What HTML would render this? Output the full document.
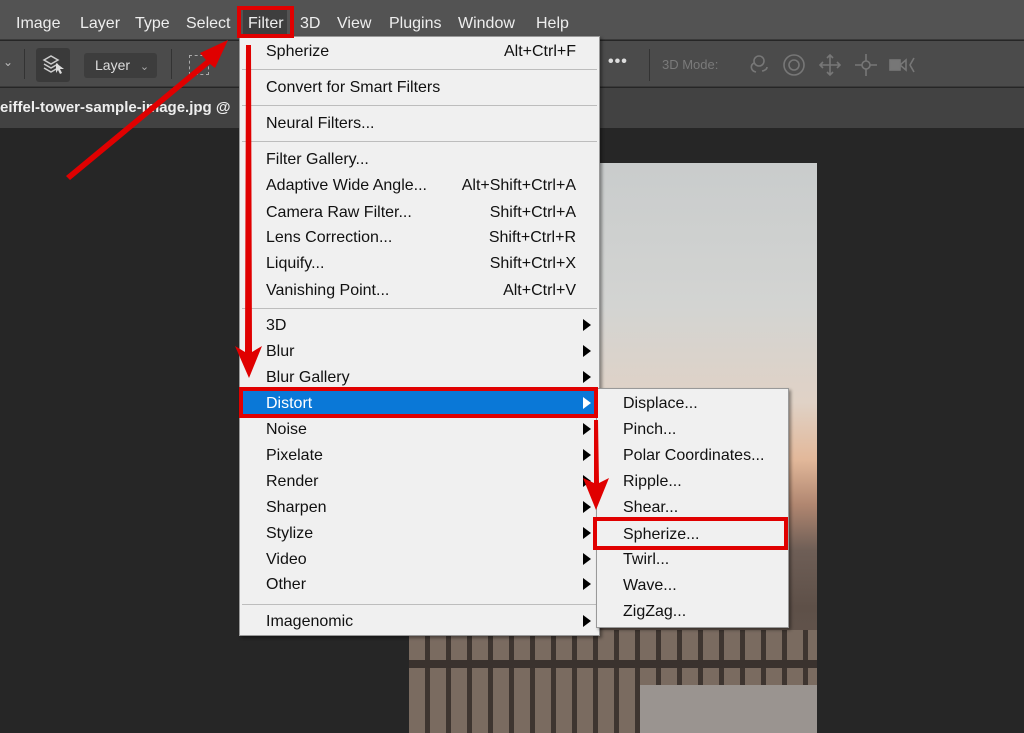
<!DOCTYPE html>
<html><head><meta charset="utf-8"><style>
*{margin:0;padding:0;box-sizing:border-box}
body{width:1024px;height:733px;overflow:hidden;background:#262626;font-family:"Liberation Sans",sans-serif;position:relative}
.abs{position:absolute}
#mb{left:0;top:0;width:1024px;height:40px;background:#535353;border-bottom:1px solid #3a3a3a}
#mb span{position:absolute;top:15px;color:#eee;font-size:16px}
#tb{left:0;top:41px;width:1024px;height:46px;background:#4b4b4b;border-bottom:1px solid #3a3a3a}
#tab{left:0;top:88px;width:1024px;height:40px;background:#424242}
#img{left:409px;top:163px;width:408px;height:570px;background:linear-gradient(180deg,#c9cccc 0%,#d3d4d2 25%,#e0d2c6 42%,#e2b89a 52%,#b08670 60%,#6e5e56 68%,#5e5048 78%,#6a5e56 100%)}
#menu{left:239px;top:36px;width:361px;height:600px;background:#f0f0f0;border:1px solid #999;box-shadow:2px 2px 3px rgba(0,0,0,.4)}
.it{position:absolute;left:26px;font-size:16px;color:#111;white-space:nowrap}
.sc{position:absolute;right:23px;font-size:16px;color:#111}
.sep{position:absolute;left:2px;width:355px;height:1px;background:#bdbdbd}
.ar{position:absolute;left:343px;width:0;height:0;border-top:6px solid transparent;border-bottom:6px solid transparent;border-left:8px solid #000}
#sub{left:596px;top:388px;width:193px;height:240px;background:#f0f0f0;border:1px solid #999;box-shadow:2px 2px 3px rgba(0,0,0,.4)}
#sub .it{left:26px}
</style></head><body>
<div id="mb" class="abs">
<div class="abs" style="left:243px;top:10px;width:44px;height:27px;background:#3e3e3e"></div>
<span style="left:16px">Image</span><span style="left:80px">Layer</span><span style="left:135px">Type</span><span style="left:186px">Select</span><span style="left:248px">Filter</span><span style="left:300px">3D</span><span style="left:337px">View</span><span style="left:389px">Plugins</span><span style="left:458px">Window</span><span style="left:536px">Help</span>
</div>
<div id="tb" class="abs">
<div class="abs" style="left:3px;top:14px;color:#bbb;font-size:12px">⌄</div>
<div class="abs" style="left:24px;top:8px;width:1px;height:30px;background:#333"></div>
<div class="abs" style="left:36px;top:7px;width:34px;height:34px;background:#3a3a3a;border-radius:3px"></div>
<svg class="abs" style="left:40px;top:10px" width="28" height="28"><g fill="none" stroke="#ccc" stroke-width="1.5"><path d="M4 9l7-4 7 4-7 4z"/><path d="M4 13l7 4 7-4"/><path d="M4 17l7 4 7-4"/></g><path d="M16 12l8 6-4 0 2 4-2 1-2-4-2 3z" fill="#ddd"/></svg>
<div class="abs" style="left:84px;top:12px;width:73px;height:25px;background:#3d3d3d;border-radius:3px;color:#ddd;font-size:14px;padding:4px 0 0 11px">Layer <span style="font-size:11px;color:#aaa;margin-left:6px">⌄</span></div>
<div class="abs" style="left:171px;top:8px;width:1px;height:30px;background:#333"></div>
<div class="abs" style="left:189px;top:14px;width:20px;height:20px;border:1.5px dashed #aaa"></div>
<div class="abs" style="left:608px;top:12px;color:#ddd;font-size:16px;font-weight:bold;letter-spacing:1px">•••</div>
<div class="abs" style="left:649px;top:8px;width:1px;height:32px;background:#333"></div>
<div class="abs" style="left:662px;top:16px;color:#7a7a7a;font-size:13px">3D Mode:</div>
<svg class="abs" style="left:744px;top:12px" width="180" height="24" fill="none" stroke="#777" stroke-width="1.6"><circle cx="15" cy="8" r="5"/><path d="M10 10a6 5 0 0 0 2 9M18 18a6 4 0 0 0 5-4"/><circle cx="50" cy="12" r="10"/><circle cx="50" cy="12" r="5"/><path d="M86 2v20M76 12h20M83 5l3-3 3 3M83 19l3 3 3-3M79 9l-3 3 3 3M93 9l3 3-3 3"/><circle cx="122" cy="12" r="4"/><path d="M122 1v7M122 16v7M111 12h7M126 12h7"/><rect x="146" y="7" width="10" height="10" fill="#777"/><path d="M156 12l6-5v10zM170 5l-4 7 4 7"/></svg>
</div>
<div id="tab" class="abs"><div class="abs" style="left:0;top:11px;color:#eee;font-size:15px;font-weight:bold">eiffel-tower-sample-image.jpg @</div></div>
<div id="img" class="abs"></div>
<div class="abs" style="left:409px;top:630px;width:408px;height:103px;background:repeating-linear-gradient(90deg,#7a6b60 0 16px,#3e3530 16px 21px)"></div>
<div class="abs" style="left:409px;top:660px;width:408px;height:8px;background:#3a322e"></div>
<div class="abs" style="left:640px;top:685px;width:177px;height:48px;background:#9a9490"></div>

<div id="menu" class="abs">
<div class="it" style="top:6px">Spherize</div><div class="sc" style="top:6px">Alt+Ctrl+F</div>
<div class="sep" style="top:32px"></div>
<div class="it" style="top:42px">Convert for Smart Filters</div>
<div class="sep" style="top:68px"></div>
<div class="it" style="top:78px">Neural Filters...</div>
<div class="sep" style="top:104px"></div>
<div class="it" style="top:114px">Filter Gallery...</div>
<div class="it" style="top:140px">Adaptive Wide Angle...</div><div class="sc" style="top:140px">Alt+Shift+Ctrl+A</div>
<div class="it" style="top:167px">Camera Raw Filter...</div><div class="sc" style="top:167px">Shift+Ctrl+A</div>
<div class="it" style="top:192px">Lens Correction...</div><div class="sc" style="top:192px">Shift+Ctrl+R</div>
<div class="it" style="top:218px">Liquify...</div><div class="sc" style="top:218px">Shift+Ctrl+X</div>
<div class="it" style="top:245px">Vanishing Point...</div><div class="sc" style="top:245px">Alt+Ctrl+V</div>
<div class="sep" style="top:271px"></div>
<div class="it" style="top:280px">3D</div><div class="ar" style="top:282px"></div>
<div class="it" style="top:306px">Blur</div><div class="ar" style="top:308px"></div>
<div class="it" style="top:332px">Blur Gallery</div><div class="ar" style="top:334px"></div>
<div class="abs" style="left:0;top:353px;width:359px;height:26px;background:#0a78d7"></div>
<div class="it" style="top:358px;color:#fff">Distort</div><div class="ar" style="top:360px;border-left-color:#fff"></div>
<div class="it" style="top:384px">Noise</div><div class="ar" style="top:386px"></div>
<div class="it" style="top:410px">Pixelate</div><div class="ar" style="top:412px"></div>
<div class="it" style="top:436px">Render</div><div class="ar" style="top:438px"></div>
<div class="it" style="top:462px">Sharpen</div><div class="ar" style="top:464px"></div>
<div class="it" style="top:488px">Stylize</div><div class="ar" style="top:490px"></div>
<div class="it" style="top:514px">Video</div><div class="ar" style="top:516px"></div>
<div class="it" style="top:539px">Other</div><div class="ar" style="top:541px"></div>
<div class="sep" style="top:567px"></div>
<div class="it" style="top:576px">Imagenomic</div><div class="ar" style="top:578px"></div>
</div>
<div id="sub" class="abs">
<div class="it" style="top:6px">Displace...</div>
<div class="it" style="top:32px">Pinch...</div>
<div class="it" style="top:58px">Polar Coordinates...</div>
<div class="it" style="top:84px">Ripple...</div>
<div class="it" style="top:110px">Shear...</div>
<div class="it" style="top:137px">Spherize...</div>
<div class="it" style="top:162px">Twirl...</div>
<div class="it" style="top:188px">Wave...</div>
<div class="it" style="top:214px">ZigZag...</div>
</div>
<div class="abs" style="left:237px;top:6px;width:57px;height:32px;border:4px solid #e00000"></div>
<div class="abs" style="left:239px;top:387px;width:359px;height:31px;border:4px solid #e00000"></div>
<div class="abs" style="left:593px;top:517px;width:195px;height:33px;border:4px solid #e00000"></div>
<svg class="abs" style="left:0;top:0" width="1024" height="733">
<g fill="#e00000">
<polygon points="66,176 206,60 200,53 228,40 215,68 210,64 70,180"/>
<polygon points="246,45 251,45 252,352 262,346 249,378 235,346 245,352"/>
<polygon points="594,420 598,420 599,483 609,478 596,510 583,478 594,483"/>
</g>
</svg>
</body></html>
